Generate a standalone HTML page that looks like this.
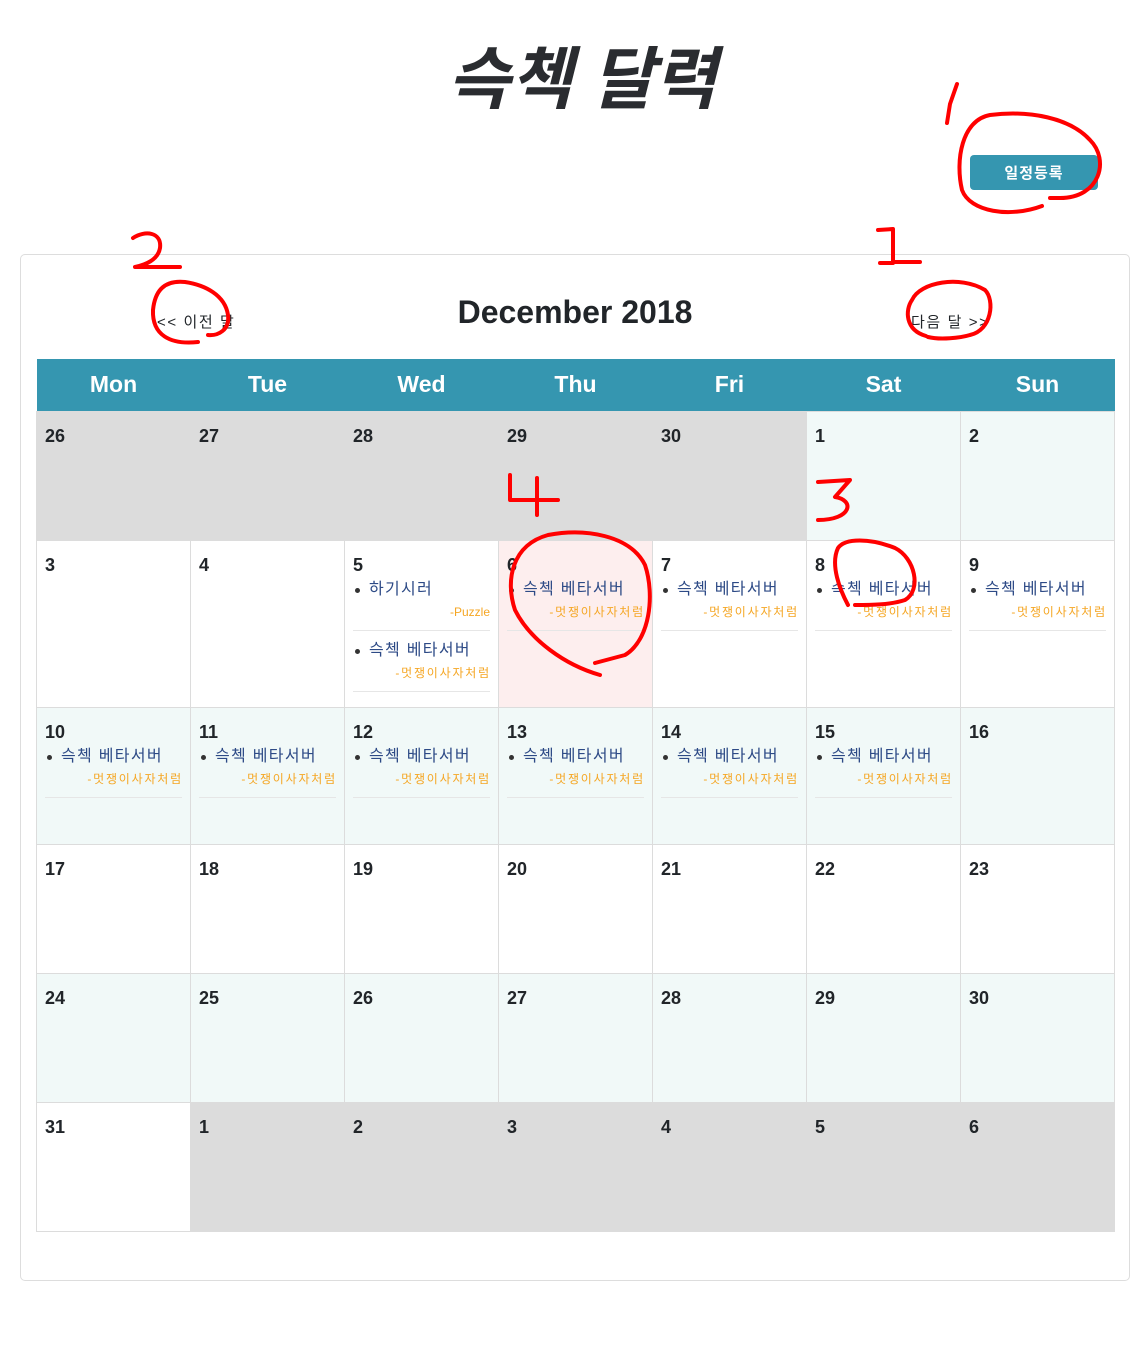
<!DOCTYPE html>
<html><head><meta charset="utf-8">
<style>
*{box-sizing:border-box}
body{margin:0;width:1136px;height:1355px;background:#fff;font-family:"Liberation Sans","Noto Sans CJK KR",sans-serif;color:#212529;position:relative;overflow:hidden}
h1{position:absolute;left:0;width:1164px;top:30px;margin:0;text-align:center;font-size:68px;font-style:italic;font-weight:bold;line-height:100px;color:#2a2c30}
.btn{position:absolute;left:970px;top:155px;width:128px;height:35px;background:#3596b0;border-radius:4px;color:#fff;font-size:15px;font-weight:bold;text-align:center;line-height:37px;letter-spacing:1px}
.card{position:absolute;left:20px;top:254px;width:1110px;height:1027px;border:1px solid #ddd;border-radius:5px}
.prev{position:absolute;left:157px;top:313px;font-size:15px;line-height:20px;letter-spacing:1.6px}
.next{position:absolute;left:911px;top:313px;font-size:15px;line-height:20px;letter-spacing:1.6px}
.mon{position:absolute;left:0;width:1150px;top:292px;text-align:center;font-size:32px;font-weight:bold;line-height:40px}
table{position:absolute;left:36px;top:359px;border-collapse:collapse;table-layout:fixed;width:1079px}
th{background:#3596b0;color:#fff;font-size:23px;font-weight:bold;height:52px;padding:0}
td{border:1px solid #dcdcdc;vertical-align:top;padding:12px 8px 0 8px;width:154px;overflow:hidden}
.g{background:#dcdcdc;border-color:#dcdcdc}
.l{background:#f1f9f8}
.p{background:#fdeeee}
.d{font-size:18px;font-weight:600;line-height:24px;display:block}
ul{margin:1px 0 0 0;padding:0;list-style:none}
li{position:relative;padding:0 0 8px 0;margin-bottom:8px;border-bottom:1px solid #e6e6e6}
li:before{content:"";position:absolute;left:2px;top:10px;width:5px;height:5px;border-radius:50%;background:#333}
.t{display:block;padding-left:16px;font-size:16px;line-height:24px;color:#2d4a86;white-space:nowrap;letter-spacing:1.3px}
.s{display:block;text-align:right;font-size:12px;line-height:20px;color:#f5a623;white-space:nowrap;letter-spacing:1.8px;margin-right:-1px}
.s.e{letter-spacing:0;margin-right:0}
svg{position:absolute;left:0;top:0}
</style></head><body>
<h1>슥첵 달력</h1>
<div class="btn">일정등록</div>
<div class="card"></div>
<div class="prev">&lt;&lt; 이전 달</div>
<div class="mon">December 2018</div>
<div class="next">다음 달 &gt;&gt;</div>
<table>
<tr><th>Mon</th><th>Tue</th><th>Wed</th><th>Thu</th><th>Fri</th><th>Sat</th><th>Sun</th></tr>
<tr style="height:129px"><td class="g"><span class="d">26</span></td><td class="g"><span class="d">27</span></td><td class="g"><span class="d">28</span></td><td class="g"><span class="d">29</span></td><td class="g"><span class="d">30</span></td><td class="l"><span class="d">1</span></td><td class="l"><span class="d">2</span></td></tr>
<tr style="height:167px"><td><span class="d">3</span></td><td><span class="d">4</span></td>
<td><span class="d">5</span><ul><li><span class="t">하기시러</span><span class="s e">-Puzzle</span></li><li><span class="t">슥첵 베타서버</span><span class="s">-멋쟁이사자처럼</span></li></ul></td>
<td class="p"><span class="d">6</span><ul><li><span class="t">슥첵 베타서버</span><span class="s">-멋쟁이사자처럼</span></li></ul></td>
<td><span class="d">7</span><ul><li><span class="t">슥첵 베타서버</span><span class="s">-멋쟁이사자처럼</span></li></ul></td>
<td><span class="d">8</span><ul><li><span class="t">슥첵 베타서버</span><span class="s">-멋쟁이사자처럼</span></li></ul></td>
<td><span class="d">9</span><ul><li><span class="t">슥첵 베타서버</span><span class="s">-멋쟁이사자처럼</span></li></ul></td></tr>
<tr style="height:137px">
<td class="l"><span class="d">10</span><ul><li><span class="t">슥첵 베타서버</span><span class="s">-멋쟁이사자처럼</span></li></ul></td>
<td class="l"><span class="d">11</span><ul><li><span class="t">슥첵 베타서버</span><span class="s">-멋쟁이사자처럼</span></li></ul></td>
<td class="l"><span class="d">12</span><ul><li><span class="t">슥첵 베타서버</span><span class="s">-멋쟁이사자처럼</span></li></ul></td>
<td class="l"><span class="d">13</span><ul><li><span class="t">슥첵 베타서버</span><span class="s">-멋쟁이사자처럼</span></li></ul></td>
<td class="l"><span class="d">14</span><ul><li><span class="t">슥첵 베타서버</span><span class="s">-멋쟁이사자처럼</span></li></ul></td>
<td class="l"><span class="d">15</span><ul><li><span class="t">슥첵 베타서버</span><span class="s">-멋쟁이사자처럼</span></li></ul></td>
<td class="l"><span class="d">16</span></td></tr>
<tr style="height:129px"><td><span class="d">17</span></td><td><span class="d">18</span></td><td><span class="d">19</span></td><td><span class="d">20</span></td><td><span class="d">21</span></td><td><span class="d">22</span></td><td><span class="d">23</span></td></tr>
<tr style="height:129px"><td class="l"><span class="d">24</span></td><td class="l"><span class="d">25</span></td><td class="l"><span class="d">26</span></td><td class="l"><span class="d">27</span></td><td class="l"><span class="d">28</span></td><td class="l"><span class="d">29</span></td><td class="l"><span class="d">30</span></td></tr>
<tr style="height:129px"><td><span class="d">31</span></td><td class="g"><span class="d">1</span></td><td class="g"><span class="d">2</span></td><td class="g"><span class="d">3</span></td><td class="g"><span class="d">4</span></td><td class="g"><span class="d">5</span></td><td class="g"><span class="d">6</span></td></tr>
</table>
<svg width="1136" height="1355" fill="none" stroke="#f00" stroke-width="4" stroke-linecap="round" stroke-linejoin="round">
<path d="M957 84 L950 104 L947 123"/>
<path d="M1042 206 C1010 218 970 212 962 190 C955 160 962 120 990 115 C1030 110 1070 118 1090 140 C1110 160 1100 198 1060 198 L1050 198"/>
<path d="M878 230 L893 229 L893 263 L880 263 M893 262 L920 262"/>
<path d="M926 336 C905 330 905 310 912 300 C920 282 960 275 985 290 C995 300 992 330 970 335 C960 338 940 340 928 337"/>
<path d="M133 238 C145 230 162 232 160 248 C158 260 145 265 135 267 L180 267"/>
<path d="M198 342 C170 345 152 335 153 310 C155 290 165 280 185 282 C205 285 225 295 228 315 C230 330 218 336 208 335"/>
<path d="M510 475 L510 500 L558 500 M537 478 L537 515"/>
<path d="M818 482 L850 480 L835 497 C855 500 852 520 818 520"/>
<path d="M848 605 C840 590 830 565 838 548 C845 538 870 538 895 548 C915 558 922 590 905 600 C890 605 870 605 855 605"/>
<path d="M600 675 C565 665 530 640 515 610 C505 580 512 545 548 535 C585 528 630 535 645 565 C655 595 650 640 625 655 L595 663"/>
</svg>
</body></html>
